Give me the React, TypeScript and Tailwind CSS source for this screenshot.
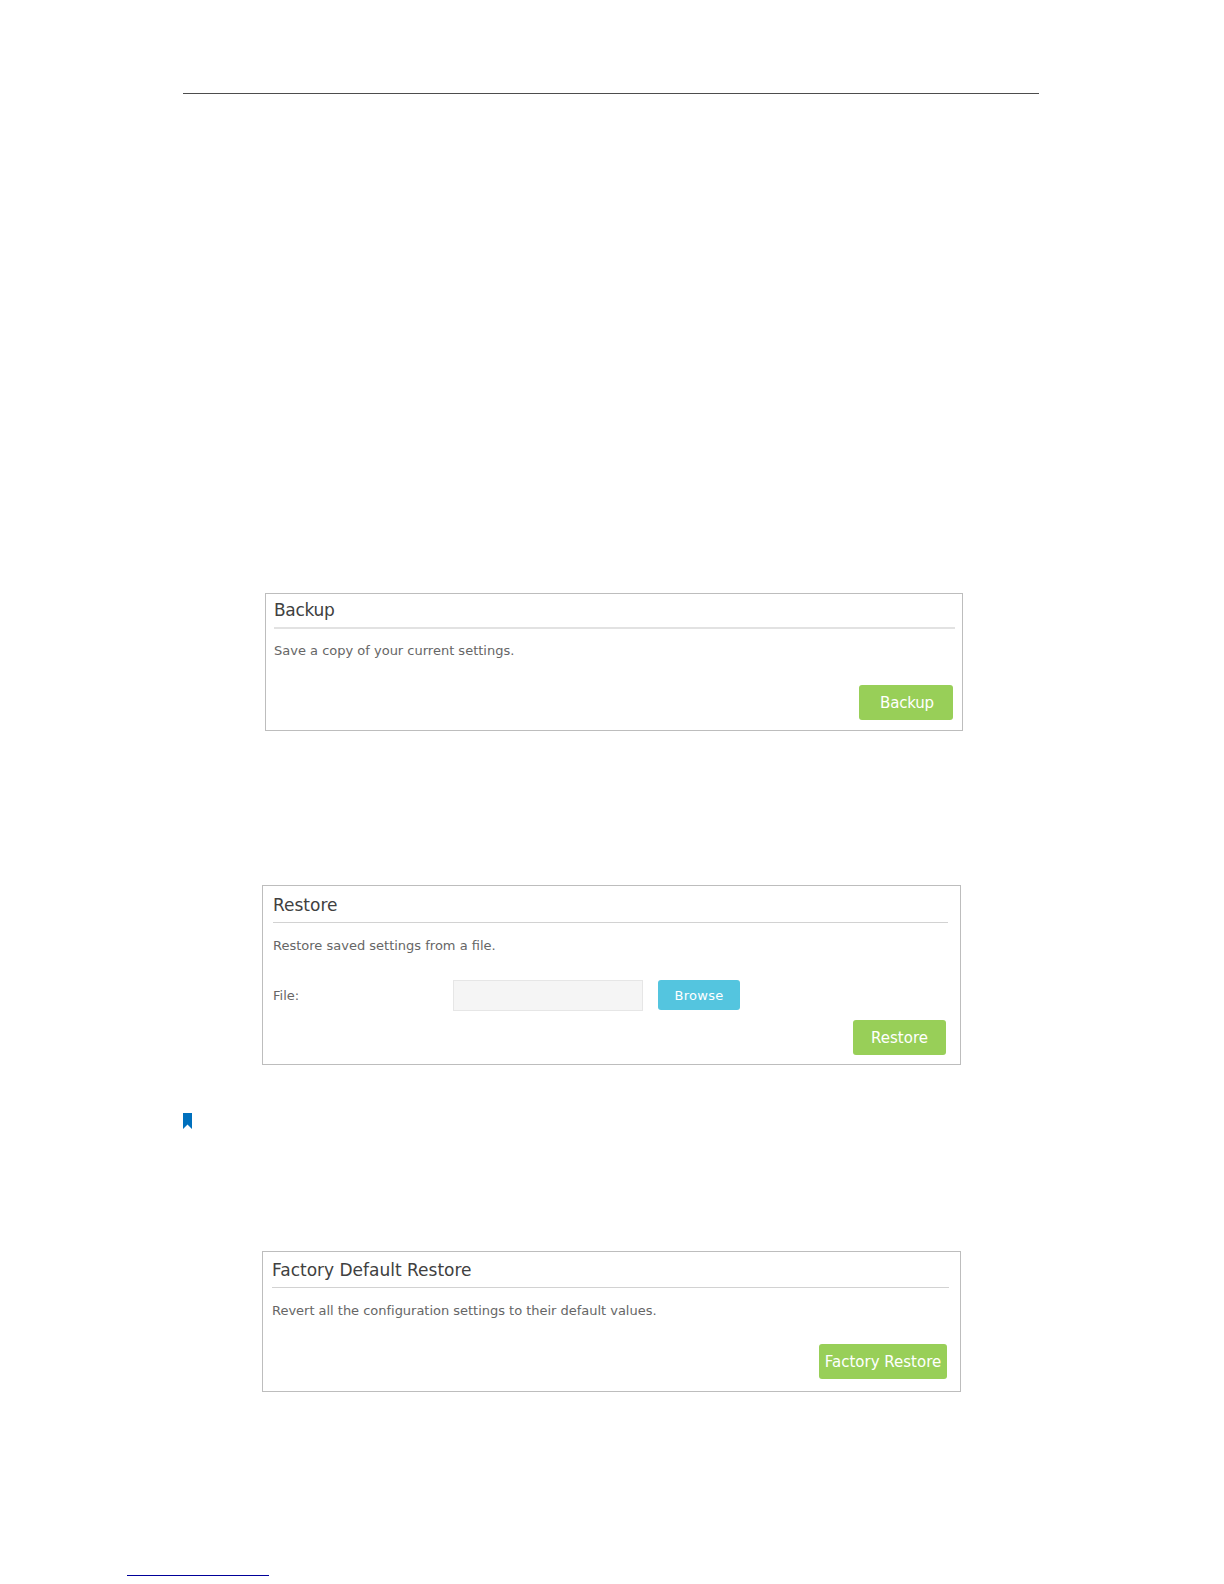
import type { ReactNode } from "react";

function GreenButton({ className, children }: { className: string; children: ReactNode }) {
  return (
    <button
      className={`flex shrink-0 items-center justify-center whitespace-nowrap rounded-[3px] bg-[#98cf58] text-[15px] leading-[20px] text-white ${className}`}
    >
      {children}
    </button>
  );
}

function BackupPanel() {
  return (
    <section className="ml-[265px] mt-[499px] flex h-[138px] w-[698px] flex-col border border-[#bdbdbd] pl-[9px] pr-[7px] pt-[7px]">
      <h2 className="-ml-px h-[28px] border-b-2 border-[#e2e2e2] text-[17px] leading-[19px] tracking-[-0.3px] text-[#404040]">Backup</h2>
      <p className="-ml-px mt-[14px] text-[13px] leading-[16px] text-[#666]">Save a copy of your current settings.</p>
      <GreenButton className="mr-[2px] mt-[26px] h-[35px] w-[94px] self-end pl-[2px] tracking-[-0.2px]">Backup</GreenButton>
    </section>
  );
}

function RestorePanel() {
  return (
    <section className="ml-[262px] mt-[154px] flex h-[180px] w-[699px] flex-col border border-[#bdbdbd] pl-[10px] pr-[12px] pt-[10px]">
      <h2 className="h-[27px] border-b border-[#d2d2d2] text-[17px] leading-[19px] text-[#404040]">Restore</h2>
      <p className="mt-[15px] text-[13px] leading-[16px] text-[#666]">Restore saved settings from a file.</p>
      <div className="mt-[26px] flex h-[31px] items-start">
        <label className="w-[180px] text-[13px] leading-[32px] text-[#666]">File:</label>
        <div className="h-[31px] w-[190px] border border-[#e6e6e6] bg-[#f5f5f5]" />
        <button className="ml-[15px] flex h-[30px] w-[82px] items-center justify-center rounded-[3px] bg-[#54c5df] pt-px text-[13px] leading-[16px] tracking-[0.3px] text-white">
          Browse
        </button>
      </div>
      <GreenButton className="mr-[2px] mt-[9px] h-[35px] w-[93px] self-end">Restore</GreenButton>
    </section>
  );
}

function FactoryRestorePanel() {
  return (
    <section className="ml-[262px] mt-[122px] flex h-[141px] w-[699px] flex-col border border-[#bdbdbd] pl-[9px] pr-[11px] pt-[9px]">
      <h2 className="h-[27px] border-b border-[#d2d2d2] text-[17px] leading-[19px] text-[#404040]">Factory Default Restore</h2>
      <p className="mt-[15px] text-[13px] leading-[16px] tracking-[-0.02px] text-[#666]">
        Revert all the configuration settings to their default values.
      </p>
      <GreenButton className="mr-[2px] mt-[25px] h-[35px] w-[128px] self-end">Factory Restore</GreenButton>
    </section>
  );
}

export default function App() {
  return (
    <main className="flex h-[1584px] w-[1224px] flex-col overflow-hidden bg-white font-['DejaVu_Sans',Verdana,sans-serif]">
      <div className="ml-[183px] mt-[93px] h-px w-[856px] shrink-0 bg-[#4d4d4d]" />
      <BackupPanel />
      <RestorePanel />
      <svg className="ml-[183px] mt-[48px] shrink-0" width="9" height="16" viewBox="0 0 9 16">
        <path d="M0 0H9V16L4.5 11.5L0 16Z" fill="#0070bd" />
      </svg>
      <FactoryRestorePanel />
      <div className="ml-[127px] mt-[183px] h-px w-[142px] shrink-0 bg-[#000099]" />
    </main>
  );
}
